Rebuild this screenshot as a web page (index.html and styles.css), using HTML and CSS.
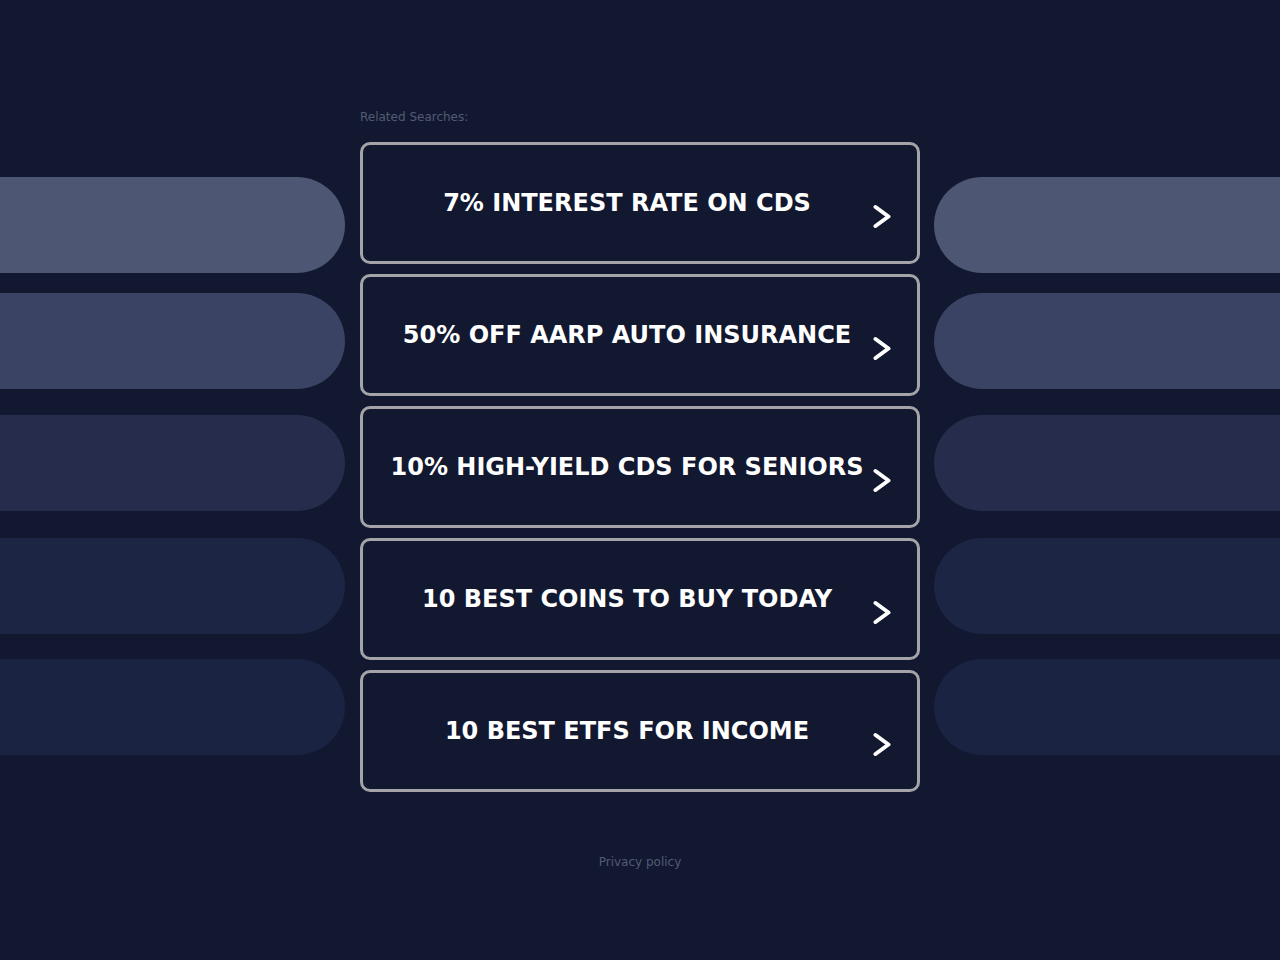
FILE: index.html
```html
<!DOCTYPE html>
<html lang="en">
<head>
<meta charset="utf-8">
<title>Related Searches</title>
<link rel="stylesheet" href="styles.css">
</head>
<body>
<div class="page">
  <div class="side side-left">
    <div class="pill pill-1"></div>
    <div class="pill pill-2"></div>
    <div class="pill pill-3"></div>
    <div class="pill pill-4"></div>
    <div class="pill pill-5"></div>
  </div>
  <div class="center">
    <div class="label">Related Searches:</div>
    <div class="links">
      <a class="link" href="#"><span class="link-text">7% INTEREST RATE ON CDS</span><svg class="chev" viewBox="0 0 18 24" width="18" height="24"><polyline points="2.5,3 15.5,12.5 2.5,22"/></svg></a>
      <a class="link" href="#"><span class="link-text">50% OFF AARP AUTO INSURANCE</span><svg class="chev" viewBox="0 0 18 24" width="18" height="24"><polyline points="2.5,3 15.5,12.5 2.5,22"/></svg></a>
      <a class="link" href="#"><span class="link-text">10% HIGH-YIELD CDS FOR SENIORS</span><svg class="chev" viewBox="0 0 18 24" width="18" height="24"><polyline points="2.5,3 15.5,12.5 2.5,22"/></svg></a>
      <a class="link" href="#"><span class="link-text">10 BEST COINS TO BUY TODAY</span><svg class="chev" viewBox="0 0 18 24" width="18" height="24"><polyline points="2.5,3 15.5,12.5 2.5,22"/></svg></a>
      <a class="link" href="#"><span class="link-text">10 BEST ETFS FOR INCOME</span><svg class="chev" viewBox="0 0 18 24" width="18" height="24"><polyline points="2.5,3 15.5,12.5 2.5,22"/></svg></a>
    </div>
    <div class="footer"><a class="privacy" href="#">Privacy policy</a></div>
  </div>
  <div class="side side-right">
    <div class="pill pill-1"></div>
    <div class="pill pill-2"></div>
    <div class="pill pill-3"></div>
    <div class="pill pill-4"></div>
    <div class="pill pill-5"></div>
  </div>
</div>
</body>
</html>
```
FILE: styles.css
```css
html, body {
  margin: 0;
  padding: 0;
}
body {
  background: #121830;
  width: 1280px;
  height: 960px;
  overflow: hidden;
  font-family: "DejaVu Sans", "Liberation Sans", sans-serif;
}
.page {
  display: grid;
  grid-template-columns: 345px 560px 1fr;
  column-gap: 15px;
  padding-top: 109px;
}
.side {
  display: flex;
  flex-direction: column;
  padding-top: 68px;
}
.side-right {
  margin-left: -1px;
}
.pill {
  height: 96px;
}
.side-left .pill {
  border-radius: 0 48px 48px 0;
}
.side-right .pill {
  border-radius: 48px 0 0 48px;
}
.pill-1 { background: #4d5673; }
.pill-2 { background: #3a4363; margin-top: 20px; }
.pill-3 { background: #262d4c; margin-top: 26px; }
.pill-4 { background: #1d2545; margin-top: 27px; }
.pill-5 { background: #1b2343; margin-top: 25px; }

.center {
  display: flex;
  flex-direction: column;
}
.label {
  font-family: "DejaVu Sans", "Liberation Sans", sans-serif;
  font-size: 12px;
  line-height: 16px;
  color: #535b74;
  margin-bottom: 17px;
}
.links {
  display: flex;
  flex-direction: column;
  gap: 10px;
}
.link {
  display: flex;
  align-items: center;
  height: 122px;
  box-sizing: border-box;
  border: 3px solid #a3a3a8;
  border-radius: 10px;
  padding-right: 26px;
  text-decoration: none;
  color: #ffffff;
}
.link-text {
  flex: 1;
  text-align: center;
  font-weight: bold;
  font-size: 24px;
  line-height: 30px;
  margin-top: -1px;
}
.chev {
  flex: none;
  margin-left: -18px;
  margin-top: 26px;
  fill: none;
  stroke: #ffffff;
  stroke-width: 4;
  stroke-linecap: round;
  stroke-linejoin: round;
}
.footer {
  margin-top: 59px;
  text-align: center;
}
.privacy {
  font-family: "DejaVu Sans", "Liberation Sans", sans-serif;
  font-size: 12px;
  line-height: 16px;
  color: #535b74;
  text-decoration: none;
}
```
